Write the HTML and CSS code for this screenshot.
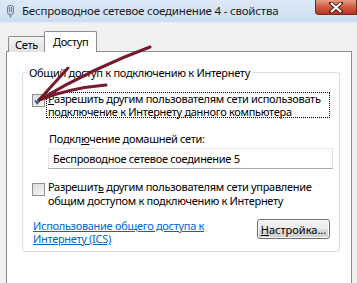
FILE: index.html
```html
<!DOCTYPE html>
<html lang="ru">
<head>
    <meta charset="UTF-8">
    <title>Беспроводное сетевое соединение 4 - свойства</title>
    <link rel="stylesheet" href="styles.css">
</head>
<body>
    <div class="window">
        <header class="titlebar">
            <svg class="app-icon" width="9" height="13" viewBox="0 0 9 13">
                <rect x="1.5" y="0.5" width="6" height="9" rx="2" fill="#c9d3dd" stroke="#6c7a88"/>
                <rect x="3" y="2" width="1" height="5" fill="#5a88c0"/>
                <rect x="5" y="2" width="1" height="5" fill="#5a88c0"/>
                <rect x="3.5" y="9.5" width="2" height="3" fill="#8a98a6"/>
            </svg>
            <span class="title">Беспроводное сетевое соединение 4 - свойства</span>
            <button class="close-btn" type="button">
                <svg width="14" height="11" viewBox="0 0 14 11">
                    <path d="M2 1 L12 10 M12 1 L2 10" stroke="#5a1d12" stroke-width="4" stroke-linecap="square"/>
                    <path d="M2 1 L12 10 M12 1 L2 10" stroke="#fff" stroke-width="2.2"/>
                </svg>
            </button>
        </header>

        <div class="dialog">
            <div class="tabs">
                <div class="tab">Сеть</div>
                <div class="tab active">Доступ</div>
            </div>

            <div class="panel">
                <fieldset class="group">
                    <legend class="group-title">Общий доступ к подключению к Интернету</legend>

                    <div class="check-row first">
                        <span class="checkbox checked">
                            <svg width="11" height="11" viewBox="0 0 11 11">
                                <path d="M2 5.5 L4.3 8.3 L9 1.8" fill="none" stroke="#2a4f8c" stroke-width="1.8"/>
                            </svg>
                        </span>
                        <span class="check-label focused"><u>Р</u>азрешить другим пользователям сети использовать<br>подключение к Интернету данного компьютера</span>
                    </div>

                    <div class="home-net">
                        <div class="field-label">Подкл<u>ю</u>чение домашней сети:</div>
                        <div class="text-box">Беспроводное сетевое соединение 5</div>
                    </div>

                    <div class="check-row second">
                        <span class="checkbox"></span>
                        <span class="check-label">Разрешит<u>ь</u> другим пользователям сети управление<br>общим доступом к подключению к Интернету</span>
                    </div>

                    <div class="bottom-row">
                        <a class="help-link" href="#">Использование общего доступа к<br>Интернету (ICS)</a>
                        <button class="push-btn" type="button"><u>Н</u>астройка...</button>
                    </div>
                </fieldset>
            </div>
        </div>

        <svg class="marker" width="357" height="283" viewBox="0 0 357 283">
            <g fill="none" stroke="#771a2b" stroke-width="3" stroke-linecap="round">
                <path d="M150 47 C 120 58, 80 76, 39 100"/>
                <path d="M68 68 L 39 100"/>
                <path d="M106 85 Q 70 88 39 100"/>
            </g>
        </svg>
    </div>
</body>
</html>
```

FILE: styles.css
```css
* {
    box-sizing: border-box;
}

body {
    margin: 0;
    font-family: 'Noto Sans', sans-serif;
    font-size: 11px;
    letter-spacing: -0.3px;
    color: #000;
    background: #f0f0f0;
}

.window {
    position: relative;
    width: 357px;
    height: 283px;
    overflow: hidden;
}

.titlebar {
    height: 23px;
    display: flex;
    align-items: flex-start;
    background: linear-gradient(#dce8f6, #cddef1);
    border-bottom: 1px solid #e4edf7;
}

.app-icon {
    margin: 5px 0 0 6px;
}

.title {
    margin-left: 7px;
    line-height: 22px;
    font-size: 11.5px;
    letter-spacing: -0.2px;
    color: #1b1b1b;
    white-space: nowrap;
}

.close-btn {
    margin-left: auto;
    width: 42px;
    height: 15px;
    padding: 0;
    border: 1px solid #6e2a1c;
    border-top: none;
    border-radius: 0 0 0 4px;
    background: linear-gradient(#e59a86, #cf5b43 50%, #b9341e);
    display: flex;
    align-items: center;
    justify-content: center;
}

.dialog {
    padding: 9px 5px 0 6px;
    height: 260px;
    display: flex;
    flex-direction: column;
}

.tabs {
    display: flex;
    align-items: flex-end;
    padding-left: 2px;
    height: 20px;
    margin-bottom: -1px;
    position: relative;
    z-index: 1;
}

.tab {
    height: 16px;
    padding: 0 6px;
    line-height: 15px;
    border: 1px solid #898c95;
    border-bottom: none;
    border-radius: 2px 2px 0 0;
    background: linear-gradient(#f3f3f3, #e3e3e3);
}

.tab.active {
    height: 21px;
    margin-left: -1px;
    padding: 0 8px;
    line-height: 19px;
    background: #fff;
}

.panel {
    flex: 1;
    background: #fff;
    border: 1px solid #898c95;
    border-bottom: none;
    padding: 13px 11px 0 15px;
}

.group {
    margin: 0;
    width: 318px;
    padding: 0 6px 6px 9px;
    border: 1px solid #d5dfe5;
    border-radius: 3px;
}

.group-title {
    margin-left: -5px;
    padding: 0 2px;
    line-height: 15px;
}

.check-row {
    display: flex;
    align-items: flex-start;
}

.check-row.first {
    margin-top: 12px;
}

.check-row.second {
    margin-top: 12px;
}

.checkbox {
    flex: none;
    width: 13px;
    height: 13px;
    margin-top: 2px;
    margin-right: 1px;
    border: 1px solid #8e8f8f;
    background: linear-gradient(135deg, #dcdcdc, #f5f5f5);
    display: flex;
    align-items: center;
    justify-content: center;
}

.checkbox.checked {
    background: linear-gradient(135deg, #d8dde4, #f4f6f8);
}

.check-label {
    width: 284px;
    padding: 0 2px;
    line-height: 13px;
    white-space: nowrap;
}

.check-label.focused {
    outline: 1px dotted #000;
    outline-offset: -1px;
}

.second .check-label {
    line-height: 14px;
    margin-top: -1px;
}

.home-net {
    padding-left: 16px;
}

.field-label {
    margin-top: 13px;
    padding-left: 1px;
    line-height: 15px;
}

.text-box {
    margin-top: 2px;
    height: 21px;
    padding: 0 4px;
    line-height: 19px;
    border: 1px solid #abadb3;
    border-top-color: #e3e9ef;
    border-left-color: #e2e3ea;
    border-right-color: #dbdfe6;
    background: #fff;
}

.bottom-row {
    margin-top: 11px;
    display: flex;
    justify-content: space-between;
    align-items: flex-start;
}

.help-link {
    line-height: 13px;
    color: #0066cc;
    text-decoration: underline;
    white-space: nowrap;
    margin-left: 1px;
}

.push-btn {
    margin-top: 0;
    margin-right: 3px;
    height: 20px;
    width: 73px;
    padding: 0;
    font: inherit;
    border: 1px solid #707070;
    border-radius: 3px;
    background: linear-gradient(#f2f2f2 0%, #ebebeb 50%, #dddddd 51%, #cfcfcf 100%);
    box-shadow: inset 0 0 0 1px #fcfcfc;
}

.marker {
    position: absolute;
    left: 0;
    top: 0;
    pointer-events: none;
}
```
